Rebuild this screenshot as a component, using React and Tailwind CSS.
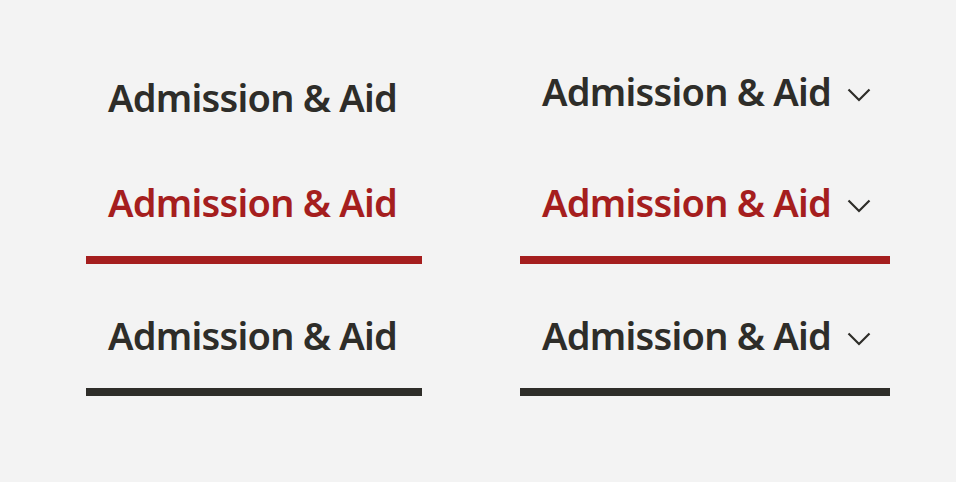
import React from 'react';

const label = 'Admission & Aid';

const Chevron = () => (
  <svg width="24" height="14" viewBox="0 0 24 14" fill="none" className="ml-[16px] shrink-0 translate-y-[3px]">
    <path d="M1.5 1.5 L12 12 L22.5 1.5" stroke="#2e2d29" strokeWidth="2.2" />
  </svg>
);

const NavItem = ({ active, underline, dropdown, className = '' }) => {
  const color = active ? 'text-[#a51e1e]' : 'text-[#2e2d29]';
  const border = active ? 'border-b-8 border-[#a51e1e]' : underline ? 'border-b-8 border-[#2e2d29]' : '';
  return (
    <div className={`px-[22px] ${border} ${className}`}>
      <div className={`flex items-center whitespace-nowrap text-[38px] leading-[39px] font-semibold tracking-[-0.02em] ${color}`}>
        <span>{label}</span>
        {dropdown && <Chevron />}
      </div>
    </div>
  );
};

export default function App() {
  return (
    <div className="min-h-screen w-full bg-[#f3f3f3] flex pl-[86px]" style={{ fontFamily: '"Noto Sans", "Open Sans", sans-serif' }}>
      {/* plain links */}
      <div className="w-[336px] flex flex-col pt-[78px]">
        <NavItem />
        <NavItem active className="mt-[66px] pb-[34px]" />
        <NavItem underline className="mt-[52px] pb-[33px]" />
      </div>

      {/* dropdown links */}
      <div className="w-[370px] ml-[98px] flex flex-col pt-[72px]">
        <NavItem dropdown />
        <NavItem dropdown active className="mt-[72px] pb-[34px]" />
        <NavItem dropdown underline className="mt-[52px] pb-[33px]" />
      </div>
    </div>
  );
}
